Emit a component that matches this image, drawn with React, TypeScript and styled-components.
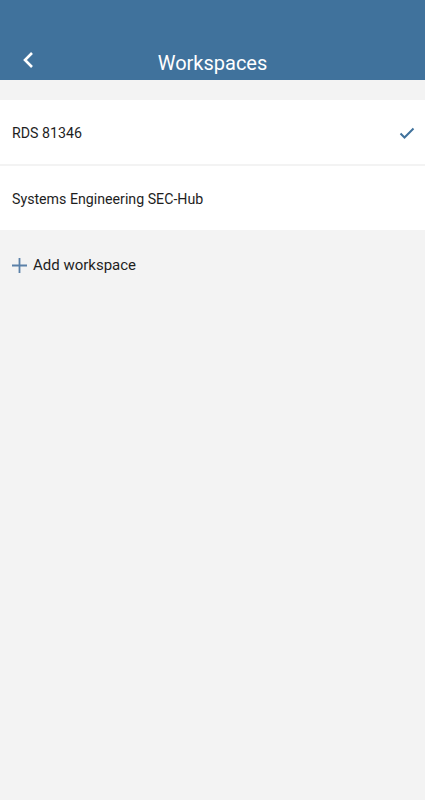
import styled, { createGlobalStyle } from "styled-components";

const GlobalStyle = createGlobalStyle`
	html, body {
		margin: 0;
		padding: 0;
		background: #f3f3f3;
	}
	body {
		font-family: Roboto, "Noto Sans", sans-serif;
	}
`;

const Page = styled.div`
	min-height: 800px;
	background: #f3f3f3;
	display: flex;
	flex-direction: column;
`;

const Header = styled.header`
	height: 80px;
	background: #40729c;
	display: flex;
	align-items: flex-end;
	position: relative;
	box-sizing: border-box;
	padding-bottom: 4px;
`;

const BackButton = styled.button`
	width: 56px;
	height: 32px;
	border: none;
	background: none;
	padding: 0 0 0 22px;
	display: flex;
	align-items: center;
	color: #fff;
`;

const Title = styled.h1`
	position: absolute;
	left: 0;
	right: 0;
	bottom: 4px;
	margin: 0;
	text-align: center;
	font-size: 20px;
	font-weight: 400;
	color: #fff;
	line-height: 26px;
	pointer-events: none;
`;

const List = styled.ul`
	list-style: none;
	margin: 20px 0 0;
	padding: 0;
	display: flex;
	flex-direction: column;
	gap: 2px;
`;

const Row = styled.li`
	height: 64px;
	box-sizing: border-box;
	padding: 2px 10px 0 12px;
	background: #fff;
	display: flex;
	align-items: center;
	justify-content: space-between;
	font-size: 14.2px;
	color: #1e1e1e;
`;

const AddRow = styled.div`
	display: flex;
	align-items: center;
	gap: 6px;
	padding: 26px 12px;
	font-size: 15px;
	color: #1e1e1e;
`;

function App() {
	const workspaces = [
		{ name: "RDS 81346", selected: true },
		{ name: "Systems Engineering SEC-Hub", selected: false },
	];
	return (
		<Page>
			<GlobalStyle />
			<Header>
				<BackButton>
					<svg width="12" height="18" viewBox="0 0 12 18">
						<path
							d="M10 2 L3 9 L10 16"
							fill="none"
							stroke="#fff"
							strokeWidth="2.6"
						/>
					</svg>
				</BackButton>
				<Title>Workspaces</Title>
			</Header>
			<List>
				{workspaces.map((w) => (
					<Row key={w.name}>
						<span>{w.name}</span>
						{w.selected && (
							<svg width="16" height="12" viewBox="0 0 16 12">
								<path
									d="M1.5 6.5 L5.5 10.5 L14.5 1.5"
									fill="none"
									stroke="#40729c"
									strokeWidth="2"
								/>
							</svg>
						)}
					</Row>
				))}
			</List>
			<AddRow>
				<svg width="15" height="15" viewBox="0 0 15 15">
					<path d="M7.5 0 V15 M0 7.5 H15" stroke="#5a80a8" strokeWidth="1.8" />
				</svg>
				<span>Add workspace</span>
			</AddRow>
		</Page>
	);
}

export default App;
